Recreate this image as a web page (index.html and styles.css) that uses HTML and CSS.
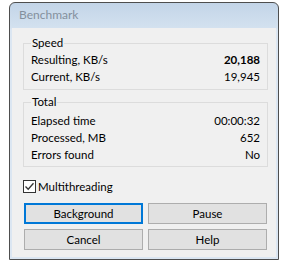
FILE: index.html
```html
<!DOCTYPE html>
<html>
<head>
<meta charset="utf-8">
<link rel="stylesheet" href="styles.css">
</head>
<body>
<div class="window">
  <div class="titlebar">Benchmark</div>
  <div class="client">
    <fieldset class="group group-speed">
      <legend>Speed</legend>
      <div class="row"><span>Resulting, KB/s</span><span class="strong">20,188</span></div>
      <div class="row"><span>Current, KB/s</span><span>19,945</span></div>
    </fieldset>
    <fieldset class="group group-total">
      <legend>Total</legend>
      <div class="row"><span>Elapsed time</span><span>00:00:32</span></div>
      <div class="row"><span>Processed, MB</span><span>652</span></div>
      <div class="row"><span>Errors found</span><span>No</span></div>
    </fieldset>
    <label class="check">
      <span class="box"><svg width="11" height="11" viewBox="0 0 11 11"><path d="M1.5 5.5 L4.2 8.3 L9.5 2.2" fill="none" stroke="#333" stroke-width="1.3"/></svg></span>
      <span>Multithreading</span>
    </label>
    <div class="buttons">
      <button class="btn focus">Background</button>
      <button class="btn">Pause</button>
      <button class="btn">Cancel</button>
      <button class="btn">Help</button>
    </div>
  </div>
</div>
</body>
</html>
```
FILE: styles.css
```css
html, body {
  margin: 0;
  padding: 0;
  background: #ffffff;
}
body {
  font-family: Lato, "Noto Sans", "Liberation Sans", sans-serif;
  font-size: 11.5px;
  color: #000;
}
.window {
  box-sizing: border-box;
  margin: 2px 0 0 9px;
  width: 270px;
  height: 258px;
  border: 1px solid #4e4e4e;
  border-radius: 6px 6px 0 0;
  background: linear-gradient(#c3d5e8 0px, #d3e1ef 25px, #dbe6f2 26px);
  padding: 0 2px 2px 2px;
  display: flex;
  flex-direction: column;
}
.titlebar {
  height: 25px;
  line-height: 24px;
  padding-left: 7px;
  color: #84909d;
  font-size: 12px;
  flex: none;
}
.client {
  flex: 1;
  background: #f0f0f0;
  padding: 7px 8px 0 11px;
  display: flex;
  flex-direction: column;
}
.group {
  margin: 0;
  padding: 0 7px 0 7px;
  border: 1px solid #dcdcdc;
  min-width: 0;
}
.group legend {
  padding: 0 1px;
  margin-left: 0;
  line-height: 16px;
}
.group-speed { padding-bottom: 4px; }
.group-total { margin-top: 4px; padding-top: 2px; padding-bottom: 3px; }
.row {
  display: flex;
  justify-content: space-between;
  line-height: 17px;
  height: 17px;
}
.strong { font-weight: bold; }
.check {
  display: flex;
  align-items: center;
  gap: 2px;
  margin-top: 13px;
  height: 13px;
  line-height: 13px;
}
.box {
  box-sizing: border-box;
  width: 13px;
  height: 13px;
  border: 1px solid #333;
  background: #fff;
  display: flex;
  align-items: center;
  justify-content: center;
}
.box svg { display: block; }
.buttons {
  margin-top: 10px;
  margin-left: 1px;
  display: grid;
  grid-template-columns: 119px 119px;
  grid-auto-rows: 21px;
  column-gap: 5px;
  row-gap: 5px;
}
.btn {
  box-sizing: border-box;
  font-family: inherit;
  font-size: 11.5px;
  color: #000;
  background: #e1e1e1;
  border: 1px solid #adadad;
  border-radius: 0;
  padding: 0;
  margin: 0;
  height: 21px;
}
.btn.focus {
  border: 2px solid #0078d7;
}
```
